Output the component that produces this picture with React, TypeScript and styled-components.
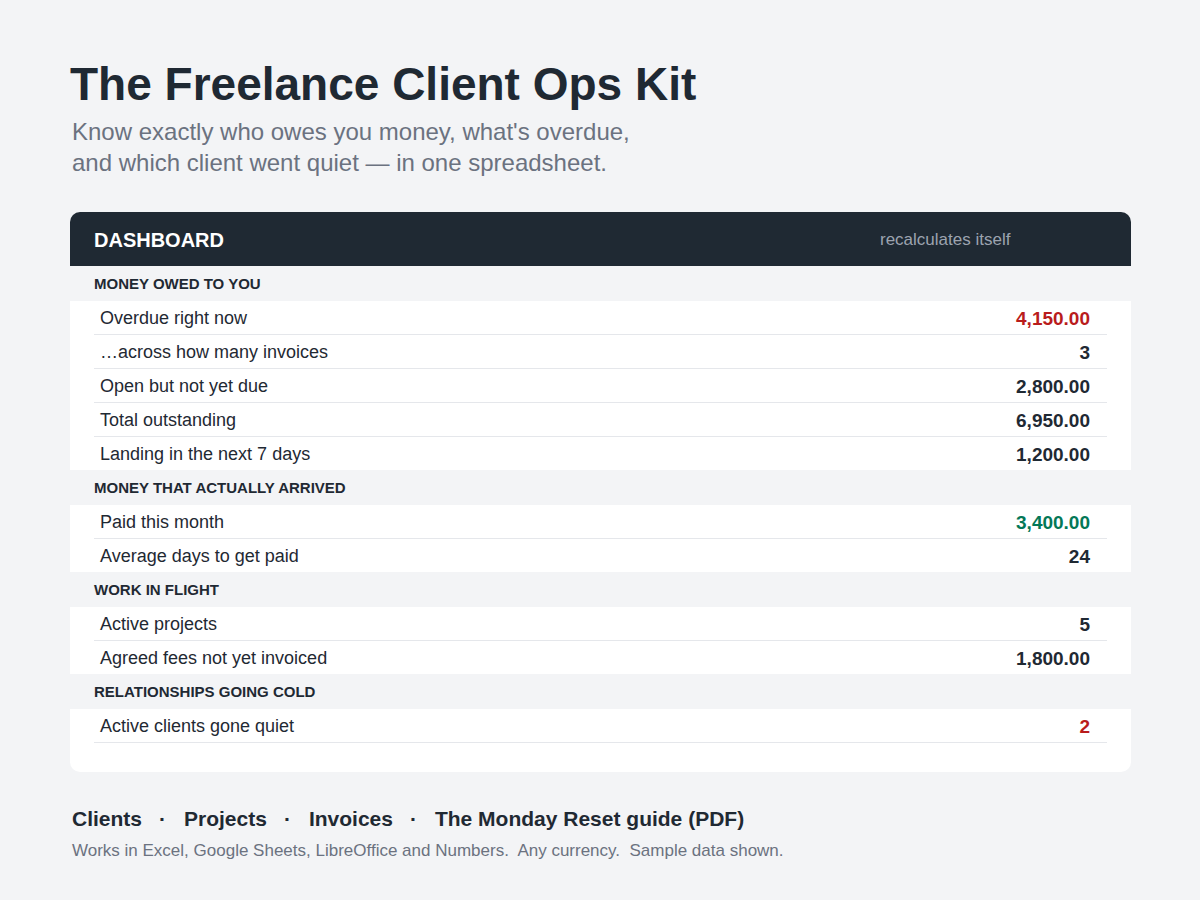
import styled, { createGlobalStyle } from 'styled-components'

type Tone = 'default' | 'bad' | 'good'

interface Metric {
  label: string
  value: string
  tone?: Tone
}

interface Section {
  title: string
  rows: Metric[]
}

const sections: Section[] = [
  {
    title: 'MONEY OWED TO YOU',
    rows: [
      { label: 'Overdue right now', value: '4,150.00', tone: 'bad' },
      { label: '…across how many invoices', value: '3' },
      { label: 'Open but not yet due', value: '2,800.00' },
      { label: 'Total outstanding', value: '6,950.00' },
      { label: 'Landing in the next 7 days', value: '1,200.00' },
    ],
  },
  {
    title: 'MONEY THAT ACTUALLY ARRIVED',
    rows: [
      { label: 'Paid this month', value: '3,400.00', tone: 'good' },
      { label: 'Average days to get paid', value: '24' },
    ],
  },
  {
    title: 'WORK IN FLIGHT',
    rows: [
      { label: 'Active projects', value: '5' },
      { label: 'Agreed fees not yet invoiced', value: '1,800.00' },
    ],
  },
  {
    title: 'RELATIONSHIPS GOING COLD',
    rows: [{ label: 'Active clients gone quiet', value: '2', tone: 'bad' }],
  },
]

const links = ['Clients', 'Projects', 'Invoices', 'The Monday Reset guide (PDF)']

const toneColors: Record<Tone, string> = {
  default: '#1f2933',
  bad: '#b91c1c',
  good: '#047857',
}

function App() {
  return (
    <>
      <GlobalStyle />
      <Page>
        <Title>The Freelance Client Ops Kit</Title>
        <Subtitle>
          Know exactly who owes you money, what's overdue,
          <br />
          and which client went quiet — in one spreadsheet.
        </Subtitle>

        <Card>
          <CardHeader>
            <HeaderTitle>DASHBOARD</HeaderTitle>
            <HeaderNote>recalculates itself</HeaderNote>
          </CardHeader>

          {sections.map((section, si) => {
            const isLastSection = si === sections.length - 1
            return (
              <div key={section.title}>
                <SectionLabel>{section.title}</SectionLabel>
                <Rows>
                  {section.rows.map((row, ri) => (
                    <Row
                      key={row.label}
                      $divider={ri < section.rows.length - 1 || isLastSection}
                    >
                      <RowLabel>{row.label}</RowLabel>
                      <RowValue $tone={row.tone ?? 'default'}>{row.value}</RowValue>
                    </Row>
                  ))}
                </Rows>
              </div>
            )
          })}
          <CardFoot />
        </Card>

        <LinkRow>
          {links.map((link, i) => (
            <span key={link}>
              {i > 0 && <Dot>·</Dot>}
              <LinkItem>{link}</LinkItem>
            </span>
          ))}
        </LinkRow>
        <FootNote>
          Works in Excel, Google Sheets, LibreOffice and Numbers.{'  '}Any currency.{'  '}Sample data shown.
        </FootNote>
      </Page>
    </>
  )
}

export default App

// Styled Components
const GlobalStyle = createGlobalStyle`
  html, body {
    margin: 0;
    padding: 0;
    background: #f3f4f6;
    font-family: "Liberation Sans", Arial, sans-serif;
    color: #1f2933;
  }
`

const Page = styled.div`
  width: 1061px;
  padding: 57px 69px 40px 70px;
`

const Title = styled.h1`
  margin: 0;
  font-size: 46px;
  line-height: 55px;
  font-weight: 700;
  color: #1f2933;
`

const Subtitle = styled.p`
  margin: 4px 0 0 2px;
  font-size: 24px;
  line-height: 31px;
  color: #6b7280;
`

const Card = styled.div`
  margin-top: 34px;
  background: #f3f4f6;
  border-radius: 10px;
  overflow: hidden;
`

const CardHeader = styled.div`
  display: grid;
  grid-template-columns: 1fr 227px;
  align-items: center;
  box-sizing: border-box;
  height: 54px;
  padding: 2px 24px 0;
  background: #1f2933;
`

const HeaderTitle = styled.div`
  font-size: 20px;
  font-weight: 700;
  color: #ffffff;
`

const HeaderNote = styled.div`
  font-size: 17px;
  color: #9ca3af;
`

const SectionLabel = styled.div`
  height: 35px;
  line-height: 35px;
  padding: 0 24px;
  font-size: 15px;
  font-weight: 700;
  color: #1f2933;
`

const Rows = styled.div`
  background: #ffffff;
  padding: 0 24px;
`

const Row = styled.div<{ $divider: boolean }>`
  display: flex;
  justify-content: space-between;
  align-items: center;
  height: 31px;
  line-height: 31px;
  padding: 2px 17px 0 6px;
  border-bottom: ${props => (props.$divider ? '1px solid #e5e7eb' : 'none')};
  font-size: 18px;
`

const RowLabel = styled.span`
  color: #1f2933;
`

const RowValue = styled.span<{ $tone: Tone }>`
  font-size: 19px;
  font-weight: 700;
  color: ${props => toneColors[props.$tone]};
`

const CardFoot = styled.div`
  height: 29px;
  background: #ffffff;
`

const LinkRow = styled.div`
  margin: 34px 0 0 2px;
  font-size: 21px;
  line-height: 26px;
  font-weight: 700;
  color: #1f2933;
`

const LinkItem = styled.span``

const Dot = styled.span`
  margin: 0 18px 0 17px;
`

const FootNote = styled.div`
  margin: 8px 0 0 2px;
  font-size: 17px;
  line-height: 22px;
  color: #6b7280;
  white-space: pre;
`
